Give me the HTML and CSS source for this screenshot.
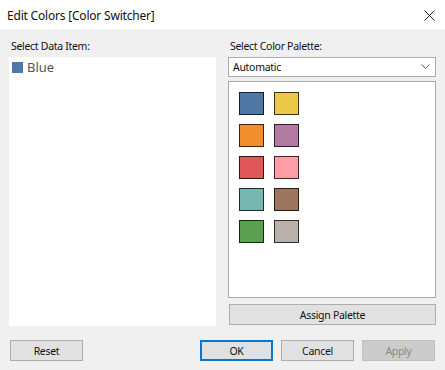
FILE: index.html
```html
<!DOCTYPE html>
<html>
<head>
<meta charset="utf-8">
<link rel="stylesheet" href="styles.css">
</head>
<body>
<div class="dialog">
  <div class="titlebar">
    <span class="title">Edit Colors [Color Switcher]</span>
    <svg class="close" width="11" height="11" viewBox="0 0 11 11"><path d="M0.5 0.5 L10.5 10.5 M10.5 0.5 L0.5 10.5" stroke="#222" stroke-width="1" fill="none"/></svg>
  </div>
  <div class="main">
    <div class="col">
      <div class="label">Select Data Item:</div>
      <div class="list">
        <div class="item"><span class="item-swatch"></span><span class="item-text">Blue</span></div>
      </div>
    </div>
    <div class="col">
      <div class="label">Select Color Palette:</div>
      <div class="select">
        <span>Automatic</span>
        <svg width="9" height="6" viewBox="0 0 9 6"><path d="M0.5 0.5 L4.5 4.5 L8.5 0.5" stroke="#555" stroke-width="1" fill="none"/></svg>
      </div>
      <div class="palette">
        <div class="swatches">
          <span class="sw" style="background:#4e79a7"></span>
          <span class="sw" style="background:#edc948"></span>
          <span class="sw" style="background:#f28e2b"></span>
          <span class="sw" style="background:#b07aa1"></span>
          <span class="sw" style="background:#e15759"></span>
          <span class="sw" style="background:#ff9da7"></span>
          <span class="sw" style="background:#76b7b2"></span>
          <span class="sw" style="background:#9c755f"></span>
          <span class="sw" style="background:#59a14f"></span>
          <span class="sw" style="background:#bab0ac"></span>
        </div>
      </div>
      <div class="btn assign">Assign Palette</div>
    </div>
  </div>
  <div class="footer">
    <div class="btn">Reset</div>
    <div class="spacer"></div>
    <div class="btn default">OK</div>
    <div class="btn">Cancel</div>
    <div class="btn disabled">Apply</div>
  </div>
</div>
</body>
</html>
```
FILE: styles.css
```css
*, *::before, *::after {
  box-sizing: border-box;
}
html, body {
  margin: 0;
  padding: 0;
}
body {
  width: 445px;
  height: 370px;
  background: #f0f0f0;
  font-family: "Noto Sans", "Liberation Sans", sans-serif;
  font-size: 10.5px;
  letter-spacing: -0.3px;
  color: #111;
  overflow: hidden;
}
.dialog {
  display: flex;
  flex-direction: column;
  height: 370px;
}
.titlebar {
  flex-shrink: 0;
  height: 29px;
  background: #fff;
  display: flex;
  align-items: center;
  justify-content: space-between;
  padding: 1px 10px 0 7px;
}
.title {
  font-size: 12px;
  letter-spacing: -0.2px;
  color: #111;
}
.main {
  flex-shrink: 0;
  display: grid;
  grid-template-columns: 207px 208px;
  column-gap: 12px;
  padding: 0 9px;
}
.col {
  display: flex;
  flex-direction: column;
}
.label {
  padding: 9px 0 0 2px;
  height: 28px;
  line-height: 16px;
}
.list {
  background: #fff;
  height: 269px;
}
.item {
  display: flex;
  align-items: center;
  padding: 3px 0 0 3px;
  height: 17px;
}
.item-swatch {
  width: 11px;
  height: 11px;
  background: #4e79a7;
  margin-right: 4px;
}
.item-text {
  font-size: 13px;
  letter-spacing: 0;
  color: #555;
}
.select {
  height: 20px;
  border: 1px solid #acacac;
  background: #fff;
  display: flex;
  align-items: center;
  justify-content: space-between;
  padding: 0 5px 0 4px;
  color: #111;
}
.palette {
  margin-top: 4px;
  height: 217px;
  border: 1px solid #a8a8a8;
  background: #fff;
  padding: 10px 10px;
}
.swatches {
  display: grid;
  grid-template-columns: 25px 25px;
  grid-auto-rows: 23px;
  column-gap: 10px;
  row-gap: 9px;
}
.sw {
  border: 1px solid rgba(0, 0, 0, 0.75);
}
.btn {
  flex-shrink: 0;
  height: 21px;
  width: 73px;
  background: #e1e1e1;
  border: 1px solid #adadad;
  display: flex;
  align-items: center;
  justify-content: center;
  color: #111;
}
.assign {
  width: 207px;
  margin: 6px 0 0 1px;
}
.footer {
  flex-shrink: 0;
  display: flex;
  padding: 14px 10px 0 10px;
  gap: 8px;
}
.spacer {
  flex: 1;
}
.default {
  border: 1px solid #0078d7;
  box-shadow: inset 0 0 0 1px #0078d7;
}
.disabled {
  background: #cccccc;
  border-color: #bfbfbf;
  color: #8a8a8a;
}
```
